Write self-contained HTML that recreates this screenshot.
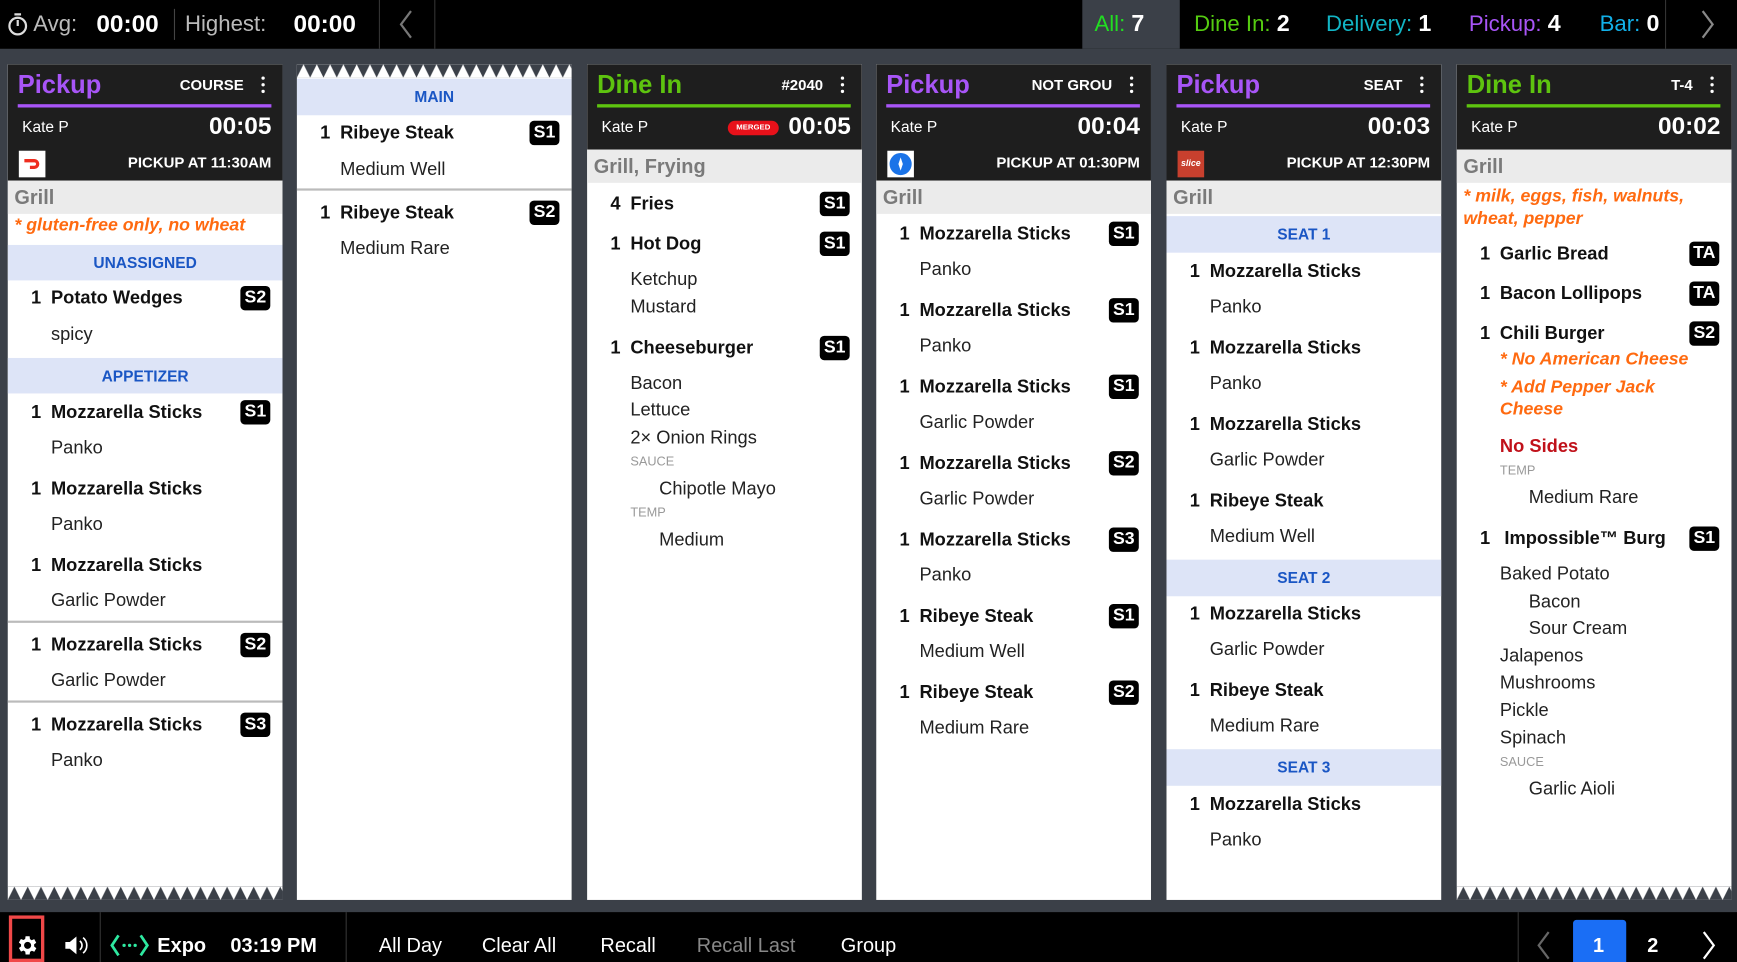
<!DOCTYPE html>
<html><head><meta charset="utf-8"><style>
*{margin:0;padding:0;box-sizing:border-box}
html,body{width:1737px;height:962px;overflow:hidden;background:#3b4048}
#root{position:absolute;left:0;top:0;width:1568px;height:868px;transform:scale(1.10778,1.1083);transform-origin:0 0;font-family:"Liberation Sans",sans-serif;background:#3b4048}
.abs{position:absolute;white-space:nowrap}
#top{position:absolute;left:0;top:0;width:1568px;height:44px;background:#000}
#bot{position:absolute;left:0;top:823px;width:1568px;height:45px;background:#000}
.card{position:absolute;top:58px;width:248px;height:754px;background:#fff;overflow:hidden}
.hd{position:absolute;left:0;top:0;width:248px;background:#1e1e1e}
.ttl{position:absolute;left:9px;top:5px;font-size:23px;font-weight:bold;line-height:27px}
.tag{position:absolute;right:35px;top:11px;font-size:13.5px;font-weight:bold;color:#fff;line-height:16px}
.dots{position:absolute;right:15px;top:11px;width:4px;height:16px}
.dots i{display:block;width:3px;height:3px;background:#fff;border-radius:50%;margin:0 0 3px 0}
.uline{position:absolute;left:9px;top:36px;width:229px;height:3px}
.kate{position:absolute;left:13px;top:48px;font-size:14px;color:#fff;line-height:16px}
.tmr{position:absolute;right:10px;top:43px;font-size:22px;font-weight:bold;color:#fff;line-height:26px}
.pk{position:absolute;right:10px;top:81px;font-size:13.5px;font-weight:bold;color:#fff;line-height:16px}
.ico{position:absolute;left:10px;top:78px;width:24px;height:24px;background:#fff}
.sec{position:absolute;left:0;width:248px;height:30px;background:#ebebeb;color:#7a7a7a;font-weight:bold;font-size:18px;line-height:30px;padding-left:6px}
.band{position:absolute;left:0;width:248px;background:#dde4f7;color:#1a56c4;font-weight:bold;font-size:14px;text-align:center}
.it{position:absolute;left:0;width:248px;height:22px;line-height:22px;font-size:16.5px;font-weight:bold;color:#111}
.it .q{position:absolute;left:21px}
.it .n{position:absolute;left:39px;white-space:nowrap}
.it .b{position:absolute;right:11px;top:0;width:27px;height:22px;background:#000;color:#fff;border-radius:4px;font-size:16px;text-align:center;line-height:22px}
.m{position:absolute;left:39px;height:22px;line-height:22px;font-size:16.5px;color:#222;white-space:nowrap}
.m2{left:65px}
.sm{position:absolute;left:39px;font-size:11.5px;color:#999;line-height:14px}
.al{position:absolute;left:6px;font-size:16px;font-weight:bold;font-style:italic;color:#ff6a10;line-height:20px;white-space:nowrap}
.hr{position:absolute;left:0;width:248px;height:2px;background:#bbb}
.tb{position:absolute;top:8px;font-size:20px;line-height:28px;white-space:nowrap}
.tb b{font-size:21px}
.bb{position:absolute;top:842px;font-size:18px;color:#fff;line-height:22px;white-space:nowrap}
.vd{position:absolute;width:1px;background:#333}
</style></head><body><div id="root">
<svg width="0" height="0" style="position:absolute"><defs>
<pattern id="zb" width="12" height="12" patternUnits="userSpaceOnUse"><path d="M0 0L0 12L6 0L12 12L12 0Z" fill="#fff"/></pattern>
<pattern id="zt" width="12" height="12" patternUnits="userSpaceOnUse"><path d="M0 12L6 0L12 12Z" fill="#fff"/></pattern>
</defs></svg>

<div id="top">
 <svg class="abs" style="left:6px;top:11px" width="20" height="22" viewBox="0 0 20 22"><circle cx="10" cy="12.5" r="7.5" fill="none" stroke="#ddd" stroke-width="2"/><path d="M7 2h6M10 12.5V7" stroke="#ddd" stroke-width="2"/></svg>
 <div class="tb" style="left:30px;color:#bbb">Avg:</div>
 <div class="tb" style="left:87px;color:#fff;font-weight:bold;font-size:22px">00:00</div>
 <div class="vd" style="left:157px;top:8px;height:28px;background:#444"></div>
 <div class="tb" style="left:167px;color:#bbb">Highest:</div>
 <div class="tb" style="left:265px;color:#fff;font-weight:bold;font-size:22px">00:00</div>
 <div class="vd" style="left:342px;top:0;height:44px;background:#333"></div>
 <svg class="abs" style="left:359px;top:9px" width="14" height="26"><path d="M12 1L3 13L12 25" fill="none" stroke="#777" stroke-width="2"/></svg>
 <div class="vd" style="left:392px;top:0;height:44px;background:#333"></div>
 <div class="abs" style="left:977px;top:0;width:88px;height:44px;background:#3b4048"></div>
 <div class="tb" style="left:988px;color:#22dd22">All: <b style="color:#fff">7</b></div>
 <div class="tb" style="left:1078px;color:#55cc11">Dine In: <b style="color:#fff">2</b></div>
 <div class="tb" style="left:1197px;color:#12b5c5">Delivery: <b style="color:#fff">1</b></div>
 <div class="tb" style="left:1326px;color:#a855f7">Pickup: <b style="color:#fff">4</b></div>
 <div class="tb" style="left:1444px;color:#12b0e8">Bar: <b style="color:#fff">0</b></div>
 <div class="vd" style="left:1503px;top:0;height:44px;background:#333"></div>
 <svg class="abs" style="left:1535px;top:9px" width="14" height="26"><path d="M2 1L11 13L2 25" fill="none" stroke="#888" stroke-width="2"/></svg>
</div>

<!-- Card 1 -->
<div class="card" style="left:7px">
 <div class="hd" style="height:105px">
  <div class="ttl" style="color:#a855f7">Pickup</div><div class="tag">COURSE</div><div class="dots"><i></i><i></i><i></i></div>
  <div class="uline" style="background:#a855f7"></div>
  <div class="kate">Kate P</div><div class="tmr">00:05</div>
  <div class="ico"><svg width="24" height="24"><path d="M5 9h9a3 3 0 010 6h-4" fill="none" stroke="#ef2d1f" stroke-width="3"/></svg></div>
  <div class="pk">PICKUP AT 11:30AM</div>
 </div>
 <div class="sec" style="top:105px">Grill</div>
 <div class="al" style="top:136px">* gluten-free only, no wheat</div>
 <div class="band" style="top:163px;height:32px;line-height:32px">UNASSIGNED</div>
 <div class="it" style="top:200px"><span class="q">1</span><span class="n">Potato Wedges</span><span class="b">S2</span></div>
 <div class="m" style="top:233px">spicy</div>
 <div class="band" style="top:265px;height:32px;line-height:32px">APPETIZER</div>
 <div class="it" style="top:303px"><span class="q">1</span><span class="n">Mozzarella Sticks</span><span class="b">S1</span></div>
 <div class="m" style="top:335px">Panko</div>
 <div class="it" style="top:372px"><span class="q">1</span><span class="n">Mozzarella Sticks</span></div>
 <div class="m" style="top:404px">Panko</div>
 <div class="it" style="top:441px"><span class="q">1</span><span class="n">Mozzarella Sticks</span></div>
 <div class="m" style="top:473px">Garlic Powder</div>
 <div class="hr" style="top:502px"></div>
 <div class="it" style="top:513px"><span class="q">1</span><span class="n">Mozzarella Sticks</span><span class="b">S2</span></div>
 <div class="m" style="top:545px">Garlic Powder</div>
 <div class="hr" style="top:574px"></div>
 <div class="it" style="top:585px"><span class="q">1</span><span class="n">Mozzarella Sticks</span><span class="b">S3</span></div>
 <div class="m" style="top:617px">Panko</div>
 <svg class="abs" style="left:0;top:742px;background:#3b4048" width="248" height="12"><rect width="248" height="12" fill="url(#zb)"/></svg>
</div>

<!-- Card 2 -->
<div class="card" style="left:268px">
 <svg class="abs" style="left:0;top:0;background:#3b4048" width="248" height="12"><rect width="248" height="12" fill="url(#zt)"/></svg>
 <div class="band" style="top:13px;height:33px;line-height:33px">MAIN</div>
 <div class="it" style="top:51px"><span class="q">1</span><span class="n">Ribeye Steak</span><span class="b">S1</span></div>
 <div class="m" style="top:84px">Medium Well</div>
 <div class="hr" style="top:112px"></div>
 <div class="it" style="top:123px"><span class="q">1</span><span class="n">Ribeye Steak</span><span class="b">S2</span></div>
 <div class="m" style="top:155px">Medium Rare</div>
</div>

<!-- Card 3 -->
<div class="card" style="left:530px">
 <div class="hd" style="height:77px">
  <div class="ttl" style="color:#5ec40f">Dine In</div><div class="tag">#2040</div><div class="dots"><i></i><i></i><i></i></div>
  <div class="uline" style="background:#5ec40f"></div>
  <div class="kate">Kate P</div>
  <div class="abs" style="left:127px;top:51px;width:46px;height:13px;background:#e8111a;border-radius:7px;color:#fff;font-size:7px;font-weight:bold;text-align:center;line-height:13px">MERGED</div>
  <div class="tmr">00:05</div>
 </div>
 <div class="sec" style="top:77px">Grill, Frying</div>
 <div class="it" style="top:115px"><span class="q">4</span><span class="n">Fries</span><span class="b">S1</span></div>
 <div class="it" style="top:151px"><span class="q">1</span><span class="n">Hot Dog</span><span class="b">S1</span></div>
 <div class="m" style="top:183px">Ketchup</div>
 <div class="m" style="top:208px">Mustard</div>
 <div class="it" style="top:245px"><span class="q">1</span><span class="n">Cheeseburger</span><span class="b">S1</span></div>
 <div class="m" style="top:277px">Bacon</div>
 <div class="m" style="top:301px">Lettuce</div>
 <div class="m" style="top:326px">2× Onion Rings</div>
 <div class="sm" style="top:352px">SAUCE</div>
 <div class="m m2" style="top:372px">Chipotle Mayo</div>
 <div class="sm" style="top:398px">TEMP</div>
 <div class="m m2" style="top:418px">Medium</div>
</div>

<!-- Card 4 -->
<div class="card" style="left:791px">
 <div class="hd" style="height:105px">
  <div class="ttl" style="color:#a855f7">Pickup</div><div class="tag">NOT GROU</div><div class="dots"><i></i><i></i><i></i></div>
  <div class="uline" style="background:#a855f7"></div>
  <div class="kate">Kate P</div><div class="tmr">00:04</div>
  <div class="ico"><svg width="24" height="24"><circle cx="12" cy="12" r="10" fill="#1a73e8"/><path d="M12 6L14 12L12 18L10 12Z" fill="#fff"/></svg></div>
  <div class="pk">PICKUP AT 01:30PM</div>
 </div>
 <div class="sec" style="top:105px">Grill</div>
 <div class="it" style="top:142px"><span class="q">1</span><span class="n">Mozzarella Sticks</span><span class="b">S1</span></div>
 <div class="m" style="top:174px">Panko</div>
 <div class="it" style="top:211px"><span class="q">1</span><span class="n">Mozzarella Sticks</span><span class="b">S1</span></div>
 <div class="m" style="top:243px">Panko</div>
 <div class="it" style="top:280px"><span class="q">1</span><span class="n">Mozzarella Sticks</span><span class="b">S1</span></div>
 <div class="m" style="top:312px">Garlic Powder</div>
 <div class="it" style="top:349px"><span class="q">1</span><span class="n">Mozzarella Sticks</span><span class="b">S2</span></div>
 <div class="m" style="top:381px">Garlic Powder</div>
 <div class="it" style="top:418px"><span class="q">1</span><span class="n">Mozzarella Sticks</span><span class="b">S3</span></div>
 <div class="m" style="top:450px">Panko</div>
 <div class="it" style="top:487px"><span class="q">1</span><span class="n">Ribeye Steak</span><span class="b">S1</span></div>
 <div class="m" style="top:519px">Medium Well</div>
 <div class="it" style="top:556px"><span class="q">1</span><span class="n">Ribeye Steak</span><span class="b">S2</span></div>
 <div class="m" style="top:588px">Medium Rare</div>
</div>

<!-- Card 5 -->
<div class="card" style="left:1053px">
 <div class="hd" style="height:105px">
  <div class="ttl" style="color:#a855f7">Pickup</div><div class="tag">SEAT</div><div class="dots"><i></i><i></i><i></i></div>
  <div class="uline" style="background:#a855f7"></div>
  <div class="kate">Kate P</div><div class="tmr">00:03</div>
  <div class="ico" style="background:#c8402e;color:#fff;font-size:8px;font-weight:bold;font-style:italic;text-align:center;line-height:24px">slice</div>
  <div class="pk">PICKUP AT 12:30PM</div>
 </div>
 <div class="sec" style="top:105px">Grill</div>
 <div class="band" style="top:137px;height:33px;line-height:33px">SEAT 1</div>
 <div class="it" style="top:176px"><span class="q">1</span><span class="n">Mozzarella Sticks</span></div>
 <div class="m" style="top:208px">Panko</div>
 <div class="it" style="top:245px"><span class="q">1</span><span class="n">Mozzarella Sticks</span></div>
 <div class="m" style="top:277px">Panko</div>
 <div class="it" style="top:314px"><span class="q">1</span><span class="n">Mozzarella Sticks</span></div>
 <div class="m" style="top:346px">Garlic Powder</div>
 <div class="it" style="top:383px"><span class="q">1</span><span class="n">Ribeye Steak</span></div>
 <div class="m" style="top:415px">Medium Well</div>
 <div class="band" style="top:447px;height:33px;line-height:33px">SEAT 2</div>
 <div class="it" style="top:485px"><span class="q">1</span><span class="n">Mozzarella Sticks</span></div>
 <div class="m" style="top:517px">Garlic Powder</div>
 <div class="it" style="top:554px"><span class="q">1</span><span class="n">Ribeye Steak</span></div>
 <div class="m" style="top:586px">Medium Rare</div>
 <div class="band" style="top:618px;height:33px;line-height:33px">SEAT 3</div>
 <div class="it" style="top:657px"><span class="q">1</span><span class="n">Mozzarella Sticks</span></div>
 <div class="m" style="top:689px">Panko</div>
</div>

<!-- Card 6 -->
<div class="card" style="left:1315px">
 <div class="hd" style="height:77px">
  <div class="ttl" style="color:#5ec40f">Dine In</div><div class="tag">T-4</div><div class="dots"><i></i><i></i><i></i></div>
  <div class="uline" style="background:#5ec40f"></div>
  <div class="kate">Kate P</div><div class="tmr">00:02</div>
 </div>
 <div class="sec" style="top:77px">Grill</div>
 <div class="al" style="top:110px">* milk, eggs, fish, walnuts,</div>
 <div class="al" style="top:130px">wheat, pepper</div>
 <div class="it" style="top:160px"><span class="q">1</span><span class="n">Garlic Bread</span><span class="b">TA</span></div>
 <div class="it" style="top:196px"><span class="q">1</span><span class="n">Bacon Lollipops</span><span class="b">TA</span></div>
 <div class="it" style="top:232px"><span class="q">1</span><span class="n">Chili Burger</span><span class="b">S2</span></div>
 <div class="al" style="left:39px;top:257px">* No American Cheese</div>
 <div class="al" style="left:39px;top:282px">* Add Pepper Jack</div>
 <div class="al" style="left:39px;top:302px">Cheese</div>
 <div class="m" style="top:334px;color:#c0111a;font-weight:bold">No Sides</div>
 <div class="sm" style="top:360px">TEMP</div>
 <div class="m m2" style="top:380px">Medium Rare</div>
 <div class="it" style="top:417px"><span class="q">1</span><span class="n" style="left:43px">Impossible™ Burg</span><span class="b">S1</span></div>
 <div class="m" style="top:449px">Baked Potato</div>
 <div class="m m2" style="top:474px">Bacon</div>
 <div class="m m2" style="top:498px">Sour Cream</div>
 <div class="m" style="top:523px">Jalapenos</div>
 <div class="m" style="top:547px">Mushrooms</div>
 <div class="m" style="top:572px">Pickle</div>
 <div class="m" style="top:597px">Spinach</div>
 <div class="sm" style="top:623px">SAUCE</div>
 <div class="m m2" style="top:643px">Garlic Aioli</div>
 <svg class="abs" style="left:0;top:742px;background:#3b4048" width="248" height="12"><rect width="248" height="12" fill="url(#zb)"/></svg>
</div>

<div id="bot"></div>
<div class="abs" style="left:8px;top:826px;width:32px;height:42px;border:3px solid #f04848"></div>
<svg class="abs" style="left:13px;top:842px" width="22" height="22" viewBox="0 0 24 24"><path fill="#fff" d="M19.4 13a7.5 7.5 0 000-2l2.1-1.6-2-3.5-2.5 1a7 7 0 00-1.7-1L15 3h-4l-.4 2.7a7 7 0 00-1.7 1l-2.5-1-2 3.5L6.6 11a7.5 7.5 0 000 2l-2.1 1.6 2 3.5 2.5-1a7 7 0 001.7 1L11 21h4l.4-2.7a7 7 0 001.7-1l2.5 1 2-3.5zM13 15.5a3.5 3.5 0 110-7 3.5 3.5 0 010 7z"/></svg>
<svg class="abs" style="left:57px;top:842px" width="26" height="22" viewBox="0 0 26 22"><path d="M2 8h4l6-5v16l-6-5H2z" fill="#fff"/><path d="M15 7a5 5 0 010 8M18 4a9 9 0 010 14" fill="none" stroke="#fff" stroke-width="1.5"/></svg>
<div class="vd" style="left:90px;top:823px;height:45px;background:#333"></div>
<svg class="abs" style="left:99px;top:842px" width="36" height="22"><path d="M8 2L2 11L8 20M28 2L34 11L28 20" fill="none" stroke="#2ee8a0" stroke-width="2.5"/><circle cx="13" cy="11" r="1.5" fill="#2ee8a0"/><circle cx="18" cy="11" r="1.5" fill="#2ee8a0"/><circle cx="23" cy="11" r="1.5" fill="#2ee8a0"/></svg>
<div class="bb" style="left:142px;font-weight:bold">Expo</div>
<div class="bb" style="left:208px;font-weight:bold">03:19 PM</div>
<div class="vd" style="left:312px;top:823px;height:45px;background:#333"></div>
<div class="bb" style="left:342px">All Day</div>
<div class="bb" style="left:435px">Clear All</div>
<div class="bb" style="left:542px">Recall</div>
<div class="bb" style="left:629px;color:#888">Recall Last</div>
<div class="bb" style="left:759px">Group</div>
<div class="vd" style="left:1370px;top:823px;height:45px;background:#333"></div>
<svg class="abs" style="left:1386px;top:840px" width="14" height="26"><path d="M12 1L3 13L12 25" fill="none" stroke="#666" stroke-width="2"/></svg>
<div class="abs" style="left:1420px;top:830px;width:48px;height:38px;background:#1a6ef5;border-radius:3px 3px 0 0"></div>
<div class="bb" style="left:1438px;font-weight:bold">1</div>
<div class="bb" style="left:1487px;font-weight:bold">2</div>
<svg class="abs" style="left:1536px;top:840px" width="14" height="26"><path d="M2 1L11 13L2 25" fill="none" stroke="#fff" stroke-width="2"/></svg>
</div></body></html>
